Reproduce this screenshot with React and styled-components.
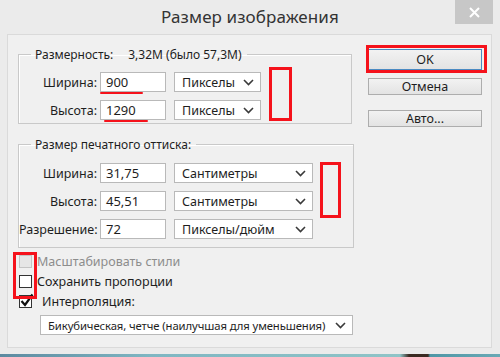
import React from 'react';
import styled, { createGlobalStyle } from 'styled-components';

const GlobalStyle = createGlobalStyle`
  html, body {
    margin: 0;
    padding: 0;
    background: #ebebeb;
  }
  body {
    font-family: 'Noto Sans', 'Open Sans', sans-serif;
    font-size: 12px;
    color: #1e1e1e;
  }
`;

const Screen = styled.div`
  position: relative;
  width: 500px;
  height: 357px;
  overflow: hidden;
  display: flex;
  flex-direction: column;
`;

const Window = styled.div`
  flex: 1;
  display: flex;
  flex-direction: column;
  background: #ebebeb;
`;

const TitleBar = styled.div`
  height: 34px;
  display: grid;
  grid-template-columns: 1fr auto 1fr;
  align-items: start;
`;

const Title = styled.div`
  grid-column: 2;
  padding-top: 5px;
  font-size: 17px;
  color: #333;
  letter-spacing: 0.1px;
`;

const CloseBtn = styled.div`
  grid-column: 3;
  justify-self: end;
  margin-right: 7px;
  width: 38px;
  height: 24px;
  background: #c7c7c7;
  display: flex;
  align-items: center;
  justify-content: center;
`;

const Panel = styled.div`
  margin: 0 8px 0 7px;
  height: 314px;
  box-sizing: border-box;
  border: 1px solid #dadada;
  background: #f0f0f0;
  display: flex;
  padding: 12px 9px 0 10px;
`;

const LeftCol = styled.div`
  display: flex;
  flex-direction: column;
`;

const RightCol = styled.div`
  margin-left: auto;
  padding-top: 2px;
  display: flex;
  flex-direction: column;
  width: 114px;
`;

const Group = styled.fieldset`
  margin: ${p => p.$mt || 0}px 0 0 0;
  padding: ${p => p.$pt}px 0 ${p => p.$pb}px 0;
  width: ${p => p.$w}px;
  box-sizing: border-box;
  border: 1px solid #c9c9c9;
  box-shadow: inset 1px 1px 0 #fff;
  display: flex;
  flex-direction: column;
  gap: ${p => p.$gap}px;
`;

const Legend = styled.legend`
  margin-left: 12px;
  padding: 0 5px 0 4px;
  display: flex;
  gap: 15px;
  line-height: 15px;
`;

const Row = styled.div`
  display: flex;
  align-items: center;
  height: 20px;
`;

const Label = styled.div`
  width: 81px;
  text-align: right;
  padding-right: 3px;
  box-sizing: border-box;
  font-size: 12.5px;
`;

const Input = styled.div`
  width: 66px;
  height: 20px;
  box-sizing: border-box;
  border: 1px solid #b9b9b9;
  background: #fff;
  padding: 0 0 0 5px;
  display: flex;
  align-items: center;
  font-size: 13px;
`;

const Select = styled.div`
  margin-left: 8px;
  width: ${p => p.$w}px;
  height: 20px;
  box-sizing: border-box;
  border: 1px solid #b9b9b9;
  background: #fff;
  padding: 0 6px 0 7px;
  display: flex;
  align-items: center;
  justify-content: space-between;
  font-size: 12.5px;
  white-space: nowrap;
`;

const Button = styled.div`
  height: ${p => p.$h}px;
  margin-top: ${p => p.$mt}px;
  box-sizing: border-box;
  border: 1px solid ${p => (p.$def ? '#4a8ac2' : '#adadad')};
  background: linear-gradient(#f2f2f2, #e3e3e3);
  display: flex;
  align-items: center;
  justify-content: center;
  font-size: 12.5px;
`;

const Options = styled.div`
  margin-top: 7px;
  display: flex;
  flex-direction: column;
  gap: 7px;
`;

const CheckRow = styled.div`
  display: flex;
  align-items: center;
  height: 13px;
  padding-left: 1px;
  font-size: 12.5px;
  color: ${p => (p.$disabled ? '#8d8d8d' : '#1e1e1e')};
`;

const Box = styled.div`
  position: relative;
  width: 13px;
  height: 13px;
  box-sizing: border-box;
  border: 1px solid ${p => (p.$disabled ? '#c4c4c4' : '#333')};
  background: ${p => (p.$disabled ? '#e6e6e6' : '#fff')};
  margin-right: ${p => p.$gap}px;
`;

const Tick = styled.svg`
  position: absolute;
  left: 0;
  top: -3px;
`;

const WideSelect = styled(Select)`
  margin-top: 7px;
  margin-left: 22px;
  font-size: 11.3px;
  letter-spacing: -0.1px;
`;

const Desktop = styled.div`
  height: 3px;
  background: linear-gradient(90deg, #5c8aa0 0%, #7fb6c2 30%, #8fc4c7 80%, #3b2a22 81.8%, #3b2a22 85.6%, #4e97a6 86%, #6aa9b5 100%);
`;

const Mark = styled.div`
  position: absolute;
  left: ${p => p.$x}px;
  top: ${p => p.$y}px;
  width: ${p => p.$w}px;
  height: ${p => p.$h}px;
  box-sizing: border-box;
  border: 3px solid #f5121b;
  pointer-events: none;
`;

const Underline = styled.div`
  position: absolute;
  left: ${p => p.$x}px;
  top: ${p => p.$y}px;
  width: ${p => p.$w}px;
  height: 2px;
  background: #f5121b;
  border-radius: 1px;
`;

const Chevron = () => (
  <svg width="11" height="7" viewBox="0 0 11 7">
    <polyline points="1,1 5.5,5.5 10,1" fill="none" stroke="#3a3a3a" strokeWidth="1.6" />
  </svg>
);

const Field = ({ label, value, unit, selectW }) => (
  <Row>
    <Label>{label}</Label>
    <Input>{value}</Input>
    <Select $w={selectW}>
      <span>{unit}</span>
      <Chevron />
    </Select>
  </Row>
);

export default function App() {
  return (
    <>
      <GlobalStyle />
      <Screen>
        <Window>
          <TitleBar>
            <Title>Размер изображения</Title>
            <CloseBtn>
              <svg width="11" height="11" viewBox="0 0 11 11">
                <path d="M1 1 L10 10 M10 1 L1 10" stroke="#fff" strokeWidth="2" />
              </svg>
            </CloseBtn>
          </TitleBar>
          <Panel>
            <LeftCol>
              <Group $w={334} $pt={10} $pb={3} $gap={8}>
                <Legend>
                  <span>Размерность:</span>
                  <span>3,32M (было 57,3M)</span>
                </Legend>
                <Field label="Ширина:" value="900" unit="Пикселы" selectW={87} />
                <Field label="Высота:" value="1290" unit="Пикселы" selectW={87} />
              </Group>
              <Group $mt={13} $w={336} $pt={11} $pb={8} $gap={8}>
                <Legend>
                  <span>Размер печатного оттиска:</span>
                </Legend>
                <Field label="Ширина:" value="31,75" unit="Сантиметры" selectW={139} />
                <Field label="Высота:" value="45,51" unit="Сантиметры" selectW={139} />
                <Field label="Разрешение:" value="72" unit="Пикселы/дюйм" selectW={139} />
              </Group>
              <Options>
                <CheckRow $disabled>
                  <Box $disabled $gap={5} />
                  Масштабировать стили
                </CheckRow>
                <CheckRow>
                  <Box $gap={5} />
                  Сохранить пропорции
                </CheckRow>
                <CheckRow>
                  <Box $gap={10}>
                    <Tick width="16" height="15" viewBox="0 0 16 15">
                      <polyline points="1.5,8 5,12 12.5,1.5" fill="none" stroke="#111" strokeWidth="2.2" />
                    </Tick>
                  </Box>
                  Интерполяция:
                </CheckRow>
              </Options>
              <WideSelect $w={313}>
                <span>Бикубическая, четче (наилучшая для уменьшения)</span>
                <Chevron />
              </WideSelect>
            </LeftCol>
            <RightCol>
              <Button $def $h={21} $mt={0}>OK</Button>
              <Button $h={17} $mt={8}>Отмена</Button>
              <Button $h={17} $mt={15}>Авто...</Button>
            </RightCol>
          </Panel>
        </Window>
        <Desktop />
        <Mark $x={366} $y={45} $w={121} $h={28} />
        <Mark $x={269} $y={67} $w={23} $h={54} />
        <Mark $x={320} $y={162} $w={21} $h={56} />
        <Mark $x={13} $y={252} $w={24} $h={47} />
        <Underline $x={100} $y={92} $w={43} />
        <Underline $x={104} $y={120} $w={44} />
      </Screen>
    </>
  );
}
